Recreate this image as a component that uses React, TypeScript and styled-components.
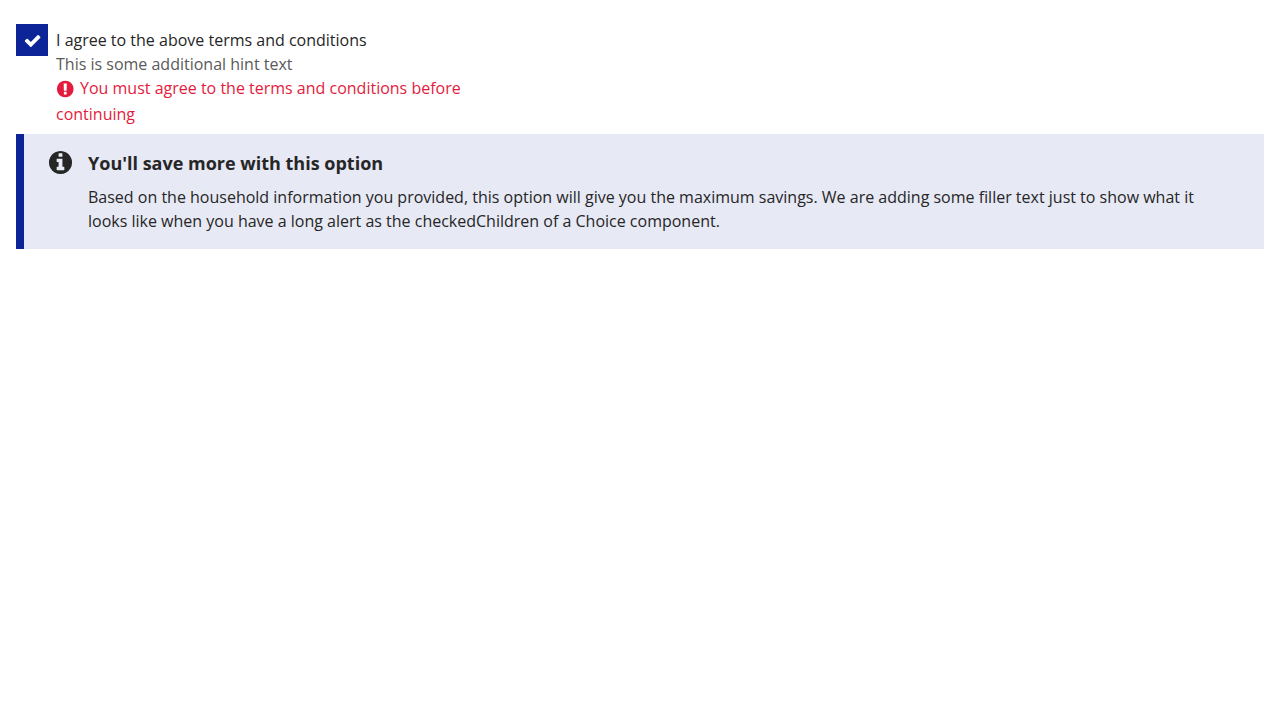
import React, { useState } from "react";
import styled, { createGlobalStyle } from "styled-components";

const color = {
  primary: "#0d2499",
  base: "#262626",
  hint: "#5a5a5a",
  error: "#e31c3d",
  alert: "#e7e9f5",
};

const GlobalStyle = createGlobalStyle`
  *, *::before, *::after { box-sizing: border-box; }
  body {
    margin: 0;
    background: #ffffff;
    color: ${color.base};
    font-family: "Open Sans", "Liberation Sans", sans-serif;
    font-size: 16px;
    line-height: 24px;
    font-kerning: none;
  }
`;

const Page = styled.main`
  padding: 24px 16px;
`;

const Choice = styled.div`
  display: flex;
  align-items: flex-start;
  gap: 8px;
`;

const CheckControl = styled.span`
  display: grid;
  place-items: center;
  flex: none;
`;

const CheckInput = styled.input`
  grid-area: 1 / 1;
  appearance: none;
  width: 32px;
  height: 32px;
  margin: 0;
  border: 2px solid ${color.base};
  background: #ffffff;
  cursor: pointer;

  &:checked {
    border-color: ${color.primary};
    background: ${color.primary};
  }
`;

const CheckMark = styled.svg`
  grid-area: 1 / 1;
  width: 18px;
  height: 18px;
  fill: #ffffff;
  pointer-events: none;
`;

const ChoiceText = styled.div`
  max-width: 420px;
  padding-top: 4px;
`;

const ChoiceLabel = styled.label`
  display: block;
  cursor: pointer;
`;

const Hint = styled.div`
  color: ${color.hint};
`;

const ErrorMessage = styled.div`
  color: ${color.error};
`;

const ErrorIcon = styled.svg`
  width: 18px;
  height: 18px;
  margin: 2px 6px 4px 0;
  fill: currentColor;
  vertical-align: middle;
`;

const Alert = styled.section`
  display: flex;
  align-items: flex-start;
  gap: 15px;
  margin-top: 8px;
  padding: 16px 32px 16px 24px;
  border-left: 8px solid ${color.primary};
  background: ${color.alert};
`;

const AlertIcon = styled.svg`
  flex: none;
  width: 25px;
  height: 25px;
  fill: currentColor;
`;

const AlertBody = styled.div`
  flex: 1;
  min-width: 0;
`;

const AlertHeading = styled.h2`
  margin: 0 0 8px;
  font-size: 18px;
  line-height: 27px;
  font-weight: 700;
`;

const AlertText = styled.p`
  margin: 0;
`;

export default function App() {
  const [agreed, setAgreed] = useState(true);

  return (
    <>
      <GlobalStyle />
      <Page>
        <Choice>
          <CheckControl>
            <CheckInput
              type="checkbox"
              id="agree"
              checked={agreed}
              onChange={(e) => setAgreed(e.target.checked)}
              aria-invalid="true"
              aria-describedby="agree-hint agree-error"
            />
            {agreed && (
              <CheckMark viewBox="-64 -64 1792 1792" aria-hidden="true">
                <path d="M1671 566q0 40-28 68l-724 724-136 136q-28 28-68 28t-68-28l-136-136-362-362q-28-28-28-68t28-68l136-136q28-28 68-28t68 28l294 295 656-657q28-28 68-28t68 28l136 136q28 28 28 68z" />
              </CheckMark>
            )}
          </CheckControl>
          <ChoiceText>
            <ChoiceLabel htmlFor="agree">I agree to the above terms and conditions</ChoiceLabel>
            <Hint id="agree-hint">This is some additional hint text</Hint>
            <ErrorMessage id="agree-error">
              <ErrorIcon viewBox="40 64 1664 1664" aria-hidden="true">
                <path d="M896 128q209 0 385.5 103t279.5 279.5 103 385.5-103 385.5-279.5 279.5-385.5 103-385.5-103-279.5-279.5-103-385.5 103-385.5 279.5-279.5 385.5-103zm128 1247v-190q0-14-9-23.5t-22-9.5h-192q-13 0-23 10t-10 23v190q0 13 10 23t23 10h192q13 0 22-9.5t9-23.5zm-2-344l18-621q0-12-10-18-10-8-24-8h-220q-14 0-24 8-10 6-10 18l17 621q0 10 10 17.5t24 7.5h185q14 0 23.5-7.5t10.5-17.5z" />
              </ErrorIcon>
              You must agree to the terms and conditions before continuing
            </ErrorMessage>
          </ChoiceText>
        </Choice>
        {agreed && (
          <Alert aria-labelledby="savings-heading">
            <AlertIcon viewBox="64 64 1664 1664" aria-hidden="true">
              <path d="M1152 1376v-160q0-14-9-23t-23-9h-96v-512q0-14-9-23t-23-9h-320q-14 0-23 9t-9 23v160q0 14 9 23t23 9h96v320h-96q-14 0-23 9t-9 23v160q0 14 9 23t23 9h448q14 0 23-9t9-23zm-128-896v-160q0-14-9-23t-23-9h-192q-14 0-23 9t-9 23v160q0 14 9 23t23 9h192q14 0 23-9t9-23zm640 416q0 209-103 385.5t-279.5 279.5-385.5 103-385.5-103-279.5-279.5-103-385.5 103-385.5 279.5-279.5 385.5-103 385.5 103 279.5 279.5 103 385.5z" />
            </AlertIcon>
            <AlertBody>
              <AlertHeading id="savings-heading">You'll save more with this option</AlertHeading>
              <AlertText>
                Based on the household information you provided, this option will give you the maximum
                savings. We are adding some filler text just to show what it looks like when you have a
                long alert as the checkedChildren of a Choice component.
              </AlertText>
            </AlertBody>
          </Alert>
        )}
      </Page>
    </>
  );
}
